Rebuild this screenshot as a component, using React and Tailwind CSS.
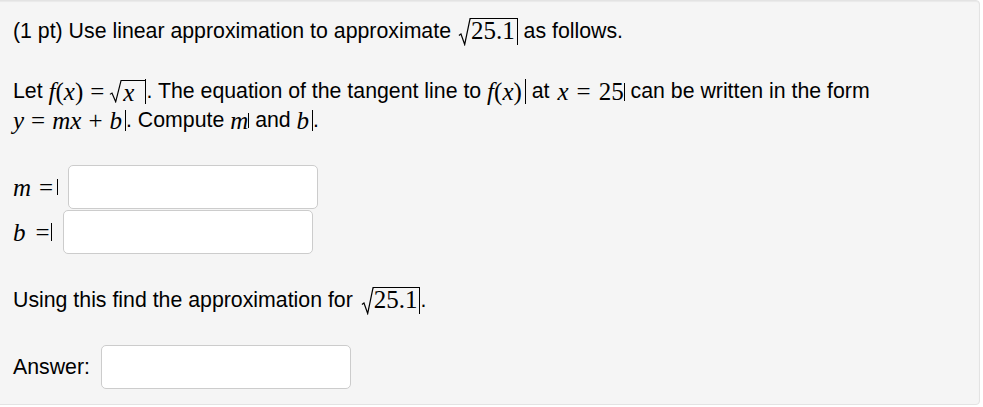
const sans = { fontFamily: '"Liberation Sans", Arial, sans-serif' };

function Bar({ h = 'h-[27px]' }) {
  return <span className={`inline-block w-px ${h} bg-black self-center`} />;
}

function M({ children, className = '' }) {
  return (
    <span className={`inline-flex items-center font-['Liberation_Serif',serif] text-[25px] leading-[29px] whitespace-pre ${className}`}>
      {children}
    </span>
  );
}

function I({ children, className = '' }) {
  return <span className={`italic ${className}`}>{children}</span>;
}

function Op({ children, className = 'mx-[7px]' }) {
  return <span className={className}>{children}</span>;
}

function Sqrt({ children, h = 'h-[28px]', pad = 'pr-[1px]' }) {
  return (
    <span className={`inline-flex items-stretch ${h}`}>
      <svg viewBox="0 0 14 28" className="w-[13px] h-full" preserveAspectRatio="none">
        <path d="M1 17.5 L3.2 16 L7.2 26.5 L13 0.6 L14 0.6" fill="none" stroke="black" strokeWidth="1.3" />
      </svg>
      <span className={`border-t-[1.3px] border-black leading-[24px] ${pad}`}>{children}</span>
    </span>
  );
}

function Field() {
  return (
    <input
      type="text"
      className="w-[250px] h-[44px] bg-white border border-[#cccccc] rounded-[5px] outline-none"
    />
  );
}

export default function App() {
  return (
    <div className="bg-white w-[983px] h-[407px]" style={sans}>
      <div className="-ml-[4px] w-[984px] h-[405px] bg-[#f5f5f5] border border-[#e3e3e3] rounded-[4px] shadow-[inset_0_1px_1px_rgba(0,0,0,0.05)] pl-[16px] pt-[16px] text-[21.3px] leading-[29px] text-black">
        <p className="flex items-center">
          <span>(1 pt) Use linear approximation to approximate&nbsp;</span>
          <M className="ml-[1px]">
            <Sqrt pad="pr-[2px]">25.1</Sqrt>
          </M>
          <Bar />
          <span>&nbsp;as follows.</span>
        </p>

        <div className="mt-[31px]">
          <p className="flex items-center">
            <span>Let&nbsp;</span>
            <M>
              <I>f</I>(<I>x</I>)<Op className="ml-[7px] mr-[5px]">=</Op>
              <Sqrt h="h-[23px]" pad="pl-[1px] pr-[11px]">
                <I>x</I>
              </Sqrt>
            </M>
            <Bar h="h-[25px]" />
            <span>. The equation of the tangent line to&nbsp;</span>
            <M className="pr-[3px]">
              <I>f</I>(<I>x</I>)
            </M>
            <Bar h="h-[25px]" />
            <span>&nbsp;at&nbsp;</span>
            <M className="ml-[2px]">
              <I>x</I>
              <Op className="mx-[8px]">=</Op>
              25
            </M>
            <Bar h="h-[18px]" />
            <span>&nbsp;can be written in the form</span>
          </p>
          <p className="flex items-center">
            <M>
              <I>y</I>
              <Op className="mx-[7px]">=</Op>
              <I>mx</I>
              <Op className="mx-[7px]">+</Op>
              <I className="mr-[3px]">b</I>
            </M>
            <Bar h="h-[21px]" />
            <span>. Compute&nbsp;</span>
            <M>
              <I>m</I>
            </M>
            <Bar h="h-[15px]" />
            <span>&nbsp;and&nbsp;</span>
            <M>
              <I className="mr-[3px]">b</I>
            </M>
            <Bar h="h-[21px]" />
            <span>.</span>
          </p>
        </div>

        <div className="mt-[30px] flex flex-col gap-[1px]">
          <div className="flex items-center">
            <M>
              <I>m</I>
              <Op className="ml-[8px] mr-[4px]">=</Op>
            </M>
            <Bar h="h-[16px]" />
            <span className="w-[10px]" />
            <Field />
          </div>
          <div className="flex items-center">
            <M>
              <I>b</I>
              <Op className="ml-[10px] mr-[1px]">=</Op>
            </M>
            <Bar h="h-[18px]" />
            <span className="w-[11px]" />
            <Field />
          </div>
        </div>

        <p className="mt-[32px] flex items-center">
          <span>Using this find the approximation for&nbsp;</span>
          <M className="ml-[2px]">
            <Sqrt pad="pr-[2px]">25.1</Sqrt>
          </M>
          <Bar />
          <span>.</span>
        </p>

        <div className="mt-[30px] flex items-center gap-[11px]">
          <span>Answer:</span>
          <Field />
        </div>
      </div>
    </div>
  );
}
